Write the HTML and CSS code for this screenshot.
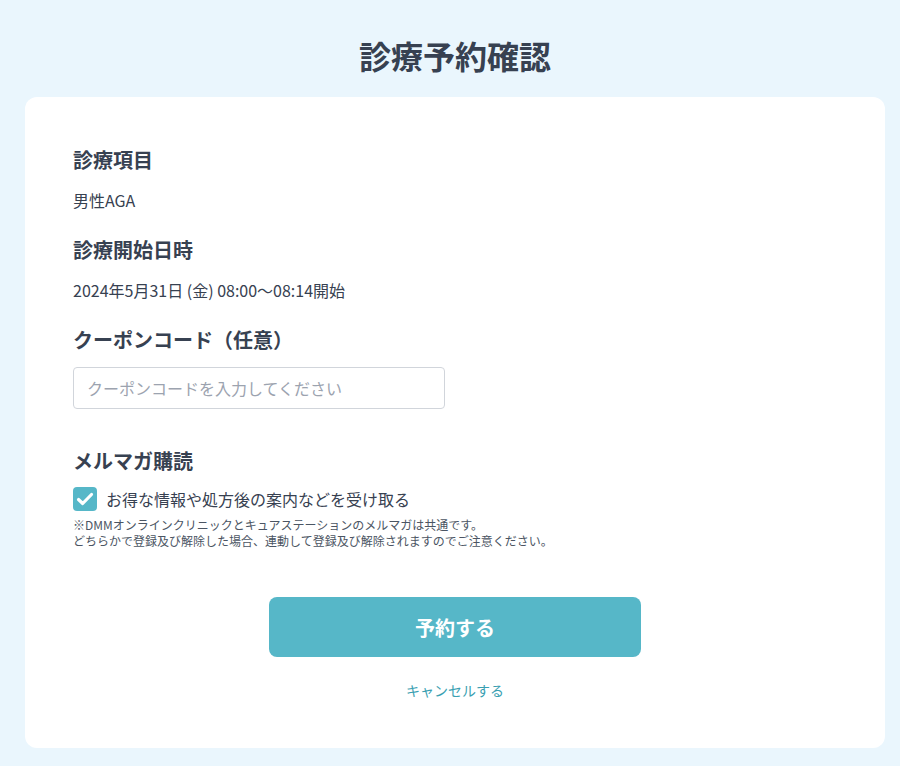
FILE: index.html
```html
<!DOCTYPE html>
<html lang="ja">
<head>
  <meta charset="UTF-8">
  <meta name="viewport" content="width=device-width, initial-scale=1.0">
  <title>診療予約確認</title>
  <link rel="stylesheet" href="styles.css">
</head>
<body>
  <h1 class="page-title">診療予約確認</h1>

  <div class="card">
    <!-- 診療項目 -->
    <h2 class="label">診療項目</h2>
    <p class="value">男性AGA</p>

    <!-- 診療開始日時 -->
    <h2 class="label label-gap">診療開始日時</h2>
    <p class="value">2024年5月31日 (金) 08:00〜08:14開始</p>

    <!-- クーポン -->
    <h2 class="label label-gap">クーポンコード（任意）</h2>
    <input type="text" class="coupon" placeholder="クーポンコードを入力してください">

    <!-- メルマガ -->
    <h2 class="label mail-label">メルマガ購読</h2>
    <label class="check-row">
      <span class="checkbox">
        <svg width="24" height="24" viewBox="0 0 24 24">
          <path d="M5.5 12.5l4.2 4L18.5 7.5" fill="none" stroke="#fff" stroke-width="3.2" stroke-linecap="round" stroke-linejoin="round"/>
        </svg>
      </span>
      お得な情報や処方後の案内などを受け取る
    </label>
    <p class="note">※DMMオンラインクリニックとキュアステーションのメルマガは共通です。<br>どちらかで登録及び解除した場合、連動して登録及び解除されますのでご注意ください。</p>

    <div class="actions">
      <button type="button" class="submit">予約する</button>
      <a href="#" class="cancel">キャンセルする</a>
    </div>
  </div>
</body>
</html>
```

FILE: styles.css
```css
* {
  box-sizing: border-box;
}

body {
  margin: 0;
  padding: 0 15px 18px 25px;
  font-family: 'Noto Sans CJK JP', 'Noto Sans', sans-serif;
  background: #eaf6fd;
  color: #374151;
}

.page-title {
  margin: 0;
  padding-top: 33px;
  height: 97px;
  font-size: 32px;
  line-height: 44px;
  font-weight: 700;
  text-align: center;
}

.card {
  background: #fff;
  border-radius: 12px;
  padding: 49px 48px 48px;
}

.label {
  margin: 0;
  font-size: 20px;
  line-height: 28px;
  font-weight: 700;
}

.label-gap {
  margin-top: 24px;
}

.value {
  margin: 14px 0 0;
  font-size: 16px;
  line-height: 24px;
}

.coupon {
  display: block;
  margin-top: 13px;
  width: 372px;
  height: 42px;
  padding: 0 13px;
  border: 1px solid #d1d5db;
  border-radius: 4px;
  font-family: inherit;
  font-size: 16px;
  color: #374151;
}

.coupon::placeholder {
  color: #9ca3af;
}

.mail-label {
  margin-top: 38px;
}

.check-row {
  display: flex;
  align-items: center;
  gap: 9px;
  margin-top: 12px;
  font-size: 16px;
  line-height: 24px;
}

.checkbox {
  width: 24px;
  height: 24px;
  border-radius: 4px;
  background: #56b7c8;
  display: flex;
  align-items: center;
  justify-content: center;
}

.note {
  margin: 6px 0 0;
  font-size: 12px;
  line-height: 16px;
  color: #4b5563;
}

.actions {
  display: flex;
  flex-direction: column;
  align-items: center;
  margin-top: 48px;
}

.submit {
  width: 372px;
  height: 60px;
  border: none;
  border-radius: 8px;
  background: #56b7c8;
  color: #fff;
  font-family: inherit;
  font-size: 20px;
  font-weight: 700;
  cursor: pointer;
}

.cancel {
  margin-top: 23px;
  font-size: 14px;
  line-height: 20px;
  color: #3a9fb2;
  text-decoration: none;
}
```
